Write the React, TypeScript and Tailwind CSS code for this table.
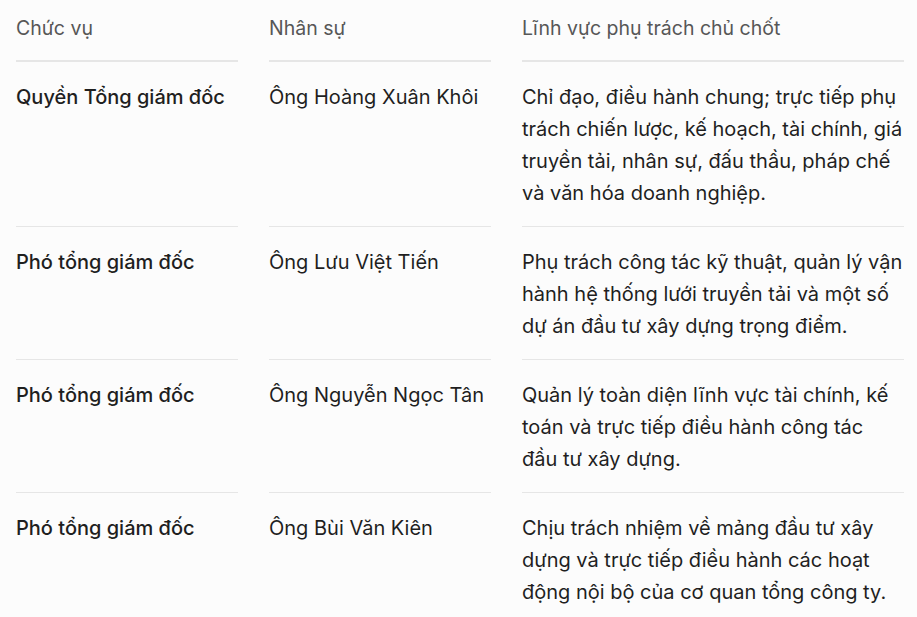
import React from 'react'

const rows = [
  {
    role: 'Quyền Tổng giám đốc',
    name: 'Ông Hoàng Xuân Khôi',
    scope:
      'Chỉ đạo, điều hành chung; trực tiếp phụ trách chiến lược, kế hoạch, tài chính, giá truyền tải, nhân sự, đấu thầu, pháp chế và văn hóa doanh nghiệp.',
  },
  {
    role: 'Phó tổng giám đốc',
    name: 'Ông Lưu Việt Tiến',
    scope:
      'Phụ trách công tác kỹ thuật, quản lý vận hành hệ thống lưới truyền tải và một số dự án đầu tư xây dựng trọng điểm.',
  },
  {
    role: 'Phó tổng giám đốc',
    name: 'Ông Nguyễn Ngọc Tân',
    scope:
      'Quản lý toàn diện lĩnh vực tài chính, kế toán và trực tiếp điều hành công tác đầu tư xây dựng.',
  },
  {
    role: 'Phó tổng giám đốc',
    name: 'Ông Bùi Văn Kiên',
    scope:
      'Chịu trách nhiệm về mảng đầu tư xây dựng và trực tiếp điều hành các hoạt động nội bộ của cơ quan tổng công ty.',
  },
]

export default function App() {
  return (
    <div className="min-h-[617px] w-full bg-[#fcfcfc] px-4 font-['Inter','Noto_Sans',sans-serif] text-[20px] leading-8 text-[#1f1f1f]">
      <div className="grid w-[888px] grid-cols-[222px_222px_382px] gap-x-[31px]">
        {/* header */}
        <div className="border-b-2 border-[#e6e6e6] pt-[12px] pb-[16px] text-[19.5px] text-[#575757]">Chức vụ</div>
        <div className="border-b-2 border-[#e6e6e6] pt-[12px] pb-[16px] text-[19.5px] text-[#575757]">Nhân sự</div>
        <div className="border-b-2 border-[#e6e6e6] pt-[12px] pb-[16px] text-[19.5px] text-[#575757]">
          Lĩnh vực phụ trách chủ chốt
        </div>

        {rows.map((r, i) => (
          <React.Fragment key={i}>
            <div className={`pt-[19px] pb-[17px] font-medium ${i > 0 ? 'border-t border-[#e6e6e6]' : ''}`}>
              {r.role}
            </div>
            <div className={`pt-[19px] pb-[17px] ${i > 0 ? 'border-t border-[#e6e6e6]' : ''}`}>{r.name}</div>
            <div className={`pt-[19px] pb-[17px] ${i > 0 ? 'border-t border-[#e6e6e6]' : ''}`}>{r.scope}</div>
          </React.Fragment>
        ))}
      </div>
    </div>
  )
}
